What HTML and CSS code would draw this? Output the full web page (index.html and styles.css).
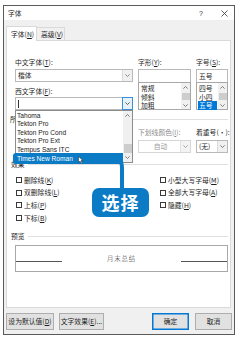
FILE: index.html
```html
<!DOCTYPE html>
<html>
<head>
<meta charset="utf-8">
<link rel="stylesheet" href="styles.css">
</head>
<body>
<div class="dialog">
  <div class="titlebar">
    <span class="title">字体</span>
    <span class="help">?</span>
    <svg class="close" viewBox="0 0 7 7"><path d="M0.5 0.5 L6.5 6.5 M6.5 0.5 L0.5 6.5" stroke="#333" stroke-width="0.8"/></svg>
  </div>
  <div class="tabs">
    <div class="tab active">字体(<u>N</u>)</div>
    <div class="tab other">高级(<u>V</u>)</div>
  </div>
  <div class="panel">
    <div class="top">
      <div class="col">
        <div class="lbl">中文字体(<u>T</u>):</div>
        <div class="combo"><span class="val">楷体</span><span class="drop"><svg width="5" height="3" viewBox="0 0 5 3"><path d="M0.4 0.4 L2.5 2.5 L4.6 0.4" fill="none" stroke="#707070" stroke-width="0.8"/></svg></span></div>
        <div class="lbl lbl2">西文字体(<u>F</u>):</div>
        <div class="combo-wrap">
          <div class="combo focus"><span class="val"><span class="caret"></span></span><span class="drop"><svg width="5" height="3" viewBox="0 0 5 3"><path d="M0.4 0.4 L2.5 2.5 L4.6 0.4" fill="none" stroke="#404040" stroke-width="0.8"/></svg></span></div>
          <div class="dropdown">
            <div class="ditems">
              <div class="ditem">Tahoma</div>
              <div class="ditem">Tekton Pro</div>
              <div class="ditem">Tekton Pro Cond</div>
              <div class="ditem">Tekton Pro Ext</div>
              <div class="ditem">Tempus Sans ITC</div>
            </div>
            <div class="sbar">
              <span class="arr"><svg width="5" height="3" viewBox="0 0 5 3"><path d="M0.4 2.6 L2.5 0.5 L4.6 2.6" fill="none" stroke="#606060" stroke-width="0.8"/></svg></span>
              <span class="sp"></span>
              <span class="thumb"></span>
              <span class="arr"><svg width="5" height="3" viewBox="0 0 5 3"><path d="M0.4 0.4 L2.5 2.5 L4.6 0.4" fill="none" stroke="#606060" stroke-width="0.8"/></svg></span>
            </div>
            <div class="pick">Times New Roman<svg class="cursor" width="6" height="8" viewBox="0 0 6 8"><path d="M0.5 0.5 L0.5 6.5 L2 5 L3.2 7.4 L4.2 6.9 L3 4.6 L5 4.6 Z" fill="#fff" stroke="#222" stroke-width="0.5"/></svg></div>
          </div>
        </div>
      </div>
      <div class="col">
        <div class="lbl">字形(<u>Y</u>):</div>
        <div class="field"></div>
        <div class="listbox">
          <div class="litems">
            <div class="litem">常规</div>
            <div class="litem">倾斜</div>
            <div class="litem">加粗</div>
          </div>
          <div class="sbar">
            <span class="arr"><svg width="5" height="3" viewBox="0 0 5 3"><path d="M0.4 2.6 L2.5 0.5 L4.6 2.6" fill="none" stroke="#606060" stroke-width="0.8"/></svg></span>
            <span class="thumb thumb-top"></span>
            <span class="sp"></span>
            <span class="arr"><svg width="5" height="3" viewBox="0 0 5 3"><path d="M0.4 0.4 L2.5 2.5 L4.6 0.4" fill="none" stroke="#606060" stroke-width="0.8"/></svg></span>
          </div>
        </div>
      </div>
      <div class="col">
        <div class="lbl">字号(<u>S</u>):</div>
        <div class="field">五号</div>
        <div class="listbox">
          <div class="litems">
            <div class="litem">四号</div>
            <div class="litem">小四</div>
            <div class="litem sel">五号</div>
          </div>
          <div class="sbar">
            <span class="arr"><svg width="5" height="3" viewBox="0 0 5 3"><path d="M0.4 2.6 L2.5 0.5 L4.6 2.6" fill="none" stroke="#606060" stroke-width="0.8"/></svg></span>
            <span class="thumb thumb-top"></span>
            <span class="sp"></span>
            <span class="arr"><svg width="5" height="3" viewBox="0 0 5 3"><path d="M0.4 0.4 L2.5 2.5 L4.6 0.4" fill="none" stroke="#606060" stroke-width="0.8"/></svg></span>
          </div>
        </div>
      </div>
    </div>

    <div class="hdr hdr1"><span class="hdr-t">所</span></div>
    <div class="row2">
      <div class="col">
        <div class="lbl"></div>
        <div class="combo c2"><span class="val"></span><span class="drop"></span></div>
      </div>
      <div class="col">
        <div class="lbl"></div>
        <div class="combo c2"><span class="val"></span><span class="drop"></span></div>
      </div>
      <div class="col">
        <div class="lbl dis">下划线颜色(<u>I</u>):</div>
        <div class="combo c2 disabled"><span class="val center">自动</span><span class="drop"><svg width="5" height="3" viewBox="0 0 5 3"><path d="M0.4 0.4 L2.5 2.5 L4.6 0.4" fill="none" stroke="#909090" stroke-width="0.8"/></svg></span></div>
      </div>
      <div class="col">
        <div class="lbl">着重号(·):</div>
        <div class="combo c2"><span class="val">(无)</span><span class="drop"><svg width="5" height="3" viewBox="0 0 5 3"><path d="M0.4 0.4 L2.5 2.5 L4.6 0.4" fill="none" stroke="#606060" stroke-width="0.8"/></svg></span></div>
      </div>
    </div>

    <div class="hdr hdr2">效果</div>
    <div class="checks">
      <div class="ccol ccol1">
        <div class="chk"><span class="box"></span>删除线(<u>K</u>)</div>
        <div class="chk"><span class="box"></span>双删除线(<u>L</u>)</div>
        <div class="chk"><span class="box"></span>上标(<u>P</u>)</div>
        <div class="chk"><span class="box"></span>下标(<u>B</u>)</div>
      </div>
      <div class="ccol">
        <div class="chk"><span class="box"></span>小型大写字母(<u>M</u>)</div>
        <div class="chk"><span class="box"></span>全部大写字母(<u>A</u>)</div>
        <div class="chk"><span class="box"></span>隐藏(<u>H</u>)</div>
      </div>
    </div>

    <div class="hdr hdr3">预览</div>
    <div class="preview">
      <span class="pline"></span>
      <span class="ptxt">月末总结</span>
      <span class="pline"></span>
    </div>
  </div>
  <div class="buttons">
    <div class="btn b1">设为默认值(<u>D</u>)</div>
    <div class="btn b2">文字效果(<u>E</u>)...</div>
    <div class="btn b3">确定</div>
    <div class="btn b4">取消</div>
  </div>

  <svg class="connector" viewBox="0 0 230 328" width="230" height="328"><path d="M100 152 H108 Q118 152 118 162 V184" fill="none" stroke="#0b7bc6" stroke-width="4"/></svg>
  <div class="callout">选择</div>
</div>
</body>
</html>
```
FILE: styles.css
```css
* { box-sizing: border-box; margin: 0; padding: 0; }
body {
  margin: 0;
  background: #fff;
  font-family: "Noto Sans CJK SC", "Noto Sans", sans-serif;
  font-size: 6.8px;
  line-height: 9px;
  color: #1e1e1e;
}
u { text-decoration: underline; text-decoration-thickness: 0.5px; text-underline-offset: 1px; }

.dialog {
  position: relative;
  width: 232px;
  height: 330px;
  margin: 5px 0 0 3px;
  border: 1px solid #5a5a5a;
  background: #f0f0f0;
  display: flex;
  flex-direction: column;
}
.titlebar {
  height: 14px;
  background: #fff;
  display: flex;
  align-items: center;
  padding-left: 4px;
  flex: none;
}
.title { flex: 1; }
.help {
  width: 6px;
  margin-right: 17px;
  text-align: center;
  font-family: "Liberation Sans", sans-serif;
  font-size: 7px;
  color: #333;
}
.close { width: 7px; height: 7px; margin-right: 6px; }

.tabs {
  display: flex;
  margin: 6px 0 0 2px;
  height: 14px;
  position: relative;
  z-index: 2;
  flex: none;
}
.tab {
  display: flex;
  align-items: center;
  border: 1px solid #d9d9d9;
  border-bottom: none;
  white-space: nowrap;
}
.tab.active { width: 31px; height: 15px; background: #fff; padding-left: 4px; }
.tab.other { width: 28px; height: 13px; margin-top: 1px; border-left: none; padding-left: 4px; background: #f0f0f0; }

.panel {
  position: relative;
  z-index: 1;
  margin-left: 2px;
  width: 225px;
  height: 268px;
  background: #fff;
  border: 1px solid #d9d9d9;
  padding: 17px 2px 0 8px;
  flex: none;
}

.top {
  display: grid;
  grid-template-columns: 118px 53px 32px;
  column-gap: 5px;
  height: 52px;
}
.col { display: flex; flex-direction: column; min-width: 0; }
.lbl { height: 9px; white-space: nowrap; }
.lbl.dis { color: #8c8c8c; }
.lbl2 { margin-top: 5px; }

.combo {
  margin-top: 2px;
  height: 13px;
  border: 1px solid #b9b9b9;
  background: #fff;
  display: flex;
}
.lbl2 + .combo-wrap .combo { margin-top: 1px; }
.combo .val {
  flex: 1;
  padding-left: 2px;
  display: flex;
  align-items: center;
  white-space: nowrap;
}
.combo .val.center { justify-content: center; color: #9a9a9a; }
.combo .drop {
  width: 10px;
  background: #f0f0f0;
  border-left: 1px solid #dadada;
  display: flex;
  align-items: center;
  justify-content: center;
}
.combo.focus .drop {
  border: 1px solid #3c8fd6;
  background: #e5f1fb;
  margin: -1px -1px -1px 0;
  width: 11px;
}
.caret { width: 1px; height: 8px; background: #333; }
.combo.disabled { border-color: #d6d6d6; }
.combo.disabled .drop { background: #f3f3f3; border-left-color: #e2e2e2; }

.combo-wrap { position: relative; }
.dropdown {
  position: absolute;
  left: 0;
  right: 0;
  top: 100%;
  height: 53px;
  background: #fff;
  border: 1px solid #8c8c8c;
  display: flex;
  z-index: 5;
}
.ditems {
  flex: 1;
  overflow: hidden;
  padding-top: 0.5px;
  font-family: "Liberation Sans", "Noto Sans", sans-serif;
  font-size: 6.6px;
}
.ditem { height: 8.6px; line-height: 8.6px; padding-left: 1px; white-space: nowrap; color: #222; }
.pick {
  position: absolute;
  left: -3px;
  right: 9px;
  top: 41.6px;
  height: 11px;
  background: #0b7bc6;
  border-radius: 3px 0 0 3px;
  color: #fff;
  font-family: "Liberation Sans", "Noto Sans", sans-serif;
  font-size: 6.6px;
  line-height: 11px;
  padding-left: 4px;
  white-space: nowrap;
}
.cursor { position: absolute; left: 65px; top: 3.5px; }

.sbar {
  width: 9px;
  background: #f0f0f0;
  display: flex;
  flex-direction: column;
}
.arr { height: 9px; display: flex; align-items: center; justify-content: center; flex: none; }
.sp { flex: 1; }
.thumb { height: 9px; background: #cdcdcd; margin: 0 0.5px 0.5px; flex: none; }
.thumb-top { height: 7px; margin-top: 1px; }

.field {
  margin-top: 2px;
  height: 13px;
  border: 1px solid #b9b9b9;
  border-bottom: none;
  background: #fff;
  padding-left: 2px;
  display: flex;
  align-items: center;
  white-space: nowrap;
}
.listbox {
  height: 28px;
  border: 1px solid #a8a8a8;
  background: #fff;
  display: flex;
}
.litems { flex: 1; padding: 1px 1px 0 1px; }
.litem { height: 8.5px; line-height: 8.5px; padding-left: 1px; white-space: nowrap; }
.litem.sel { background: #0078d7; color: #fff; }

.hdr {
  display: flex;
  align-items: center;
  height: 9px;
  margin-left: -5px;
  white-space: nowrap;
}
.hdr::after {
  content: "";
  flex: 1;
  height: 1px;
  background: #e0e0e0;
  margin-left: 3px;
}
.hdr1 { margin-top: 5px; }
.hdr2 { margin-top: 7px; margin-left: -4px; }
.hdr3 { margin-top: 8px; margin-left: -4px; }

.row2 {
  display: grid;
  grid-template-columns: 58px 55px 53px 32px;
  column-gap: 5px;
  margin-top: 4px;
}
.combo.c2 { margin-top: 3px; }

.checks { display: flex; margin-top: 5px; }
.ccol { display: flex; flex-direction: column; }
.ccol1 { width: 145px; padding-left: 1px; }
.chk { height: 12.6px; display: flex; align-items: center; white-space: nowrap; }
.box {
  width: 6px;
  height: 6px;
  border: 1px solid #3a3a3a;
  background: #fff;
  margin-right: 2px;
  flex: none;
}

.preview {
  margin-top: 4px;
  height: 27px;
  border: 1px solid #a8a8a8;
  display: flex;
  align-items: center;
}
.pline { width: 46px; height: 1px; background: #555; margin-top: 6px; flex: none; }
.ptxt {
  flex: 1;
  text-align: center;
  font-size: 6.4px;
  letter-spacing: 0.8px;
  color: #333;
  font-weight: 300;
}

.buttons {
  display: flex;
  margin: 5px 2px 0 2px;
  height: 17px;
  flex: none;
}
.btn {
  height: 17px;
  border: 1px solid #adadad;
  background: #e1e1e1;
  display: flex;
  align-items: center;
  justify-content: center;
  white-space: nowrap;
}
.b1 { width: 48px; }
.b2 { width: 45px; margin-left: 5px; }
.b3 { width: 37px; margin-left: auto; border-color: #0078d7; box-shadow: inset 0 0 0 0.5px #0078d7; }
.b4 { width: 37px; margin-left: 6px; }

.connector {
  position: absolute;
  left: 0;
  top: 0;
  z-index: 6;
  pointer-events: none;
}
.callout {
  position: absolute;
  left: 88px;
  top: 182px;
  width: 57px;
  height: 29px;
  border-radius: 7px;
  background: #0b7bc6;
  color: #fff;
  font-family: "Noto Sans CJK SC", sans-serif;
  font-weight: 700;
  font-size: 18px;
  line-height: 29px;
  text-align: center;
  letter-spacing: 1px;
  z-index: 7;
}
```
